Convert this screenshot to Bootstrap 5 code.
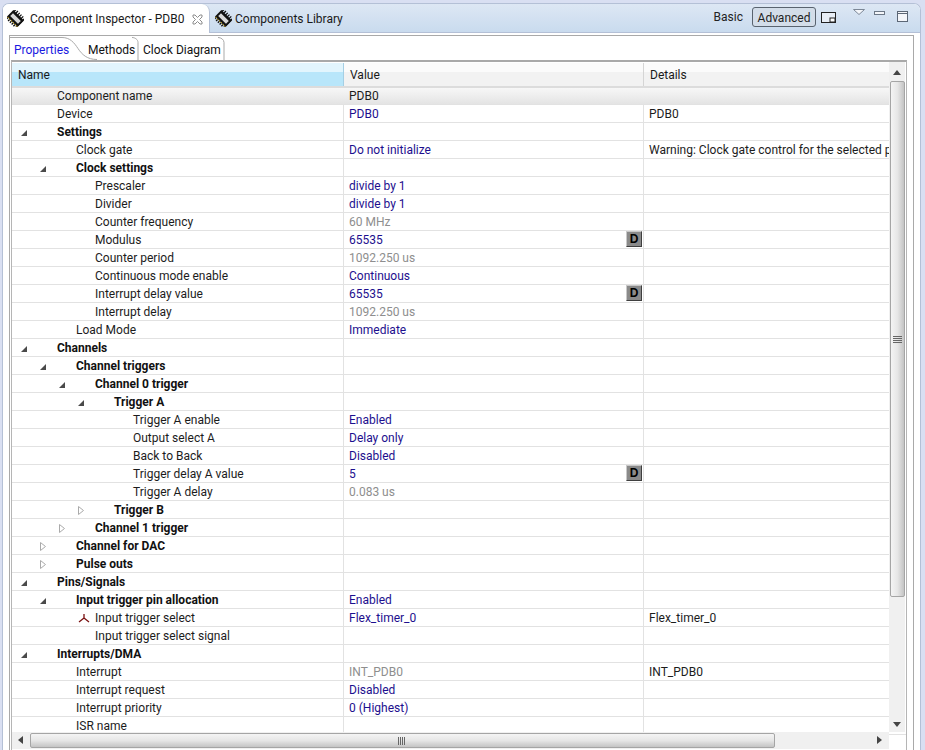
<!DOCTYPE html>
<html><head><meta charset="utf-8">
<link href="https://cdn.jsdelivr.net/npm/bootstrap@5.3.0/dist/css/bootstrap.min.css" rel="stylesheet">
<style>
html,body{height:750px;overflow:hidden;background:#fff}
body{font-family:Roboto,"Noto Sans",sans-serif;font-size:12px;line-height:18px;color:#1a1a1a;width:925px}
.shell{height:750px;padding:3px 4px 0 2px;background:#d9dff2}
.frame{height:747px;background:#fff;border:1px solid #b4c0d6;border-bottom:0;border-radius:7px 7px 0 0;overflow:hidden}
.viewtop{height:29px;background:linear-gradient(#dde7f4,#c9dbee);border-bottom:1px solid #b4c0d6;white-space:nowrap}
.wtab{height:29px;padding-top:6px}
.wtab.on{width:207px;padding-left:4px;background:#fff;border-radius:0 8px 0 0;border-right:1px solid #b4c0d6;box-shadow:0 1px 0 #fff}
.wtab.off{padding-left:5px}
.wtab span{margin-left:6px;line-height:17px;margin-top:1px}
.wtab.off span{margin-left:3px}
.closeic{margin-left:8px;margin-top:4px}
.tbtn{height:20px;line-height:18px;margin-top:3px;color:#222}
.tbtn.plain{margin-right:9px;margin-top:4px}
.tbtn.act{width:64px;padding-top:1px;text-align:center;background:#d3dde9;border:1px solid #59636f;border-radius:3px}
.ic1{margin:8px 0 0 5px}.ic2{margin:5px 0 0 16px}.ic3{margin:7px 0 0 9px}.ic4{margin:7px 12px 0 11px}
.viewbody{height:717px;padding:2px 6px 0 6px}
.panel{height:715px;border:1px solid #a9a9a9;border-bottom:0;padding:0 6px 0 1px}
.tabstrip{height:24px;position:relative;flex-wrap:nowrap;margin-left:-1px}
.tabstrip .nav-link{height:24px;line-height:18px;padding:5px 0 0;color:#111;font-size:12px;background:none;border:0;white-space:nowrap}
.tabstrip .nav-link.p1{color:#1a1ae0;width:74px;padding-left:4px}
.tabstrip .nav-link.p2{width:59px;padding-left:4px}
.tabstrip .nav-link.p3{width:82px}
.tabcurve{position:absolute;left:0;top:0;pointer-events:none}
.gridbox{border:1px solid #b5b5b5;border-top:2px solid #a9a9a9;border-bottom:0;height:691px}
.gridarea{height:689px;overflow:hidden;position:relative}
.cols{display:grid;grid-template-columns:332px 300px 262px;height:18px;border-bottom:1px solid #e2e2e2;white-space:nowrap}
.cols>div{padding-left:5px;overflow:hidden;border-right:1px solid #e2e2e2;position:relative}
.cols>div:last-child{border-right:0}
.headrow{height:25px;border-bottom:1px solid #dcdcdc;background:#fff}
.headrow>div{padding:4px 0 0 6px;margin-top:1px;line-height:16px;border-right:1px solid #d5d5d5;background:linear-gradient(#fbfbfb 0,#fbfbfb 38%,#f2f2f2 38%,#f2f2f2 100%)}
.headrow>.sorted{background:linear-gradient(#e2f5fd 0,#e2f5fd 40%,#b8e6fa 40%,#b8e6fa 100%);border-right:1px solid #a5cfe4}
.selrow{background:linear-gradient(#f8f8f8,#e4e4e4);box-shadow:inset 0 1px 0 #dcdcdc}
.selrow>div{border-right:0}
.l0{padding-left:45px!important}.l1{padding-left:64px!important}.l2{padding-left:83px!important}.l3{padding-left:102px!important}.l4{padding-left:121px!important}
.hd{font-weight:700;color:#111}
.v{color:#1d0f8e}.g{color:#8e8e8e}.k{color:#1c1c1c}
.open{position:absolute;top:7px;width:0;height:0;border-style:solid;border-width:0 0 6px 6px;border-color:transparent transparent #4a4a4a transparent}
.shut{position:absolute;top:5px}
.a0{left:9px}.a1{left:28px}.a2{left:47px}.a3{left:66px}
.dbtn{position:absolute;right:1px;top:0;width:16px;height:16px;background:#8a8a8a;border:1px solid;border-color:#c9c9c9 #3f3f3f #3f3f3f #c9c9c9;font:700 12px/14px "Liberation Sans",sans-serif;color:#000;text-align:center}
.pin{position:absolute;left:66px;top:4px}
.vbar{position:absolute;left:877px;top:0;width:17px;height:670px;background:#f0f0f0;box-shadow:inset -1px 0 0 #fff}
.hbar{position:absolute;left:0;top:670px;width:877px;height:17px;background:#f0f0f0}
.thumbv{position:absolute;left:1px;top:19px;width:15px;height:516px;background:linear-gradient(90deg,#f4f4f4,#e6e6e6 50%,#c4c4c4);border:1px solid #a5a5a5;border-radius:2px}
.thumbh{position:absolute;left:18px;top:1px;width:745px;height:15px;background:linear-gradient(#f4f4f4,#e6e6e6 50%,#c4c4c4);border:1px solid #a5a5a5;border-radius:2px}
.sarrow{position:absolute;width:0;height:0;border-style:solid;border-color:transparent}
.up{left:4px;top:8px;border-width:0 4px 5px;border-bottom-color:#444}
.dn{left:4px;top:660px;border-width:5px 4px 0;border-top-color:#444}
.lf{left:6px;top:4px;border-width:4px 5px 4px 0;border-right-color:#444}
.rt{left:865px;top:4px;border-width:4px 0 4px 5px;border-left-color:#444}
.gv{position:absolute;left:2px;top:253px}
.gh{position:absolute;left:366px;top:3px}
</style></head><body>
<div class="shell">
<div class="frame">
 <div class="viewtop d-flex">
  <div class="wtab on d-flex align-items-start">
   <svg width="17" height="17" viewBox="0 0 17 17"><g transform="rotate(-45 8.5 8.5)"><path d="M1.500 2.500h14M1.500 5h14M1.500 7.500h14M1.500 10h14M1.500 12.500h14M1.500 15h14" stroke="#111" stroke-width="1.300"/><rect x="4" y="1" width="9" height="15" fill="#111"/><path d="M3.500 2.500h1M3.500 5h1M3.500 7.500h1M3.500 10h1M3.500 12.500h1M3.500 15h1" stroke="#e0b820"/><rect x="6.500" y="3" width="4" height="11" fill="#d8d8d8"/></g></svg>
   <span>Component Inspector - PDB0</span>
   <svg class="closeic" width="11" height="11" viewBox="0 0 11 11"><path d="M1 1h2l2.500 2.500L8 1h2v2L7.500 5.500 10 8v2H8L5.500 7.500 3 10H1V8l2.500-2.500L1 3z" fill="#fff" stroke="#8c8c8c"/></svg>
  </div>
  <div class="wtab off d-flex align-items-start">
   <svg width="17" height="17" viewBox="0 0 17 17"><g transform="rotate(-45 8.5 8.5)"><path d="M1.500 2.500h14M1.500 5h14M1.500 7.500h14M1.500 10h14M1.500 12.500h14M1.500 15h14" stroke="#111" stroke-width="1.300"/><rect x="4" y="1" width="9" height="15" fill="#111"/><path d="M3.500 2.500h1M3.500 5h1M3.500 7.500h1M3.500 10h1M3.500 12.500h1M3.500 15h1" stroke="#e0b820"/><rect x="6.500" y="3" width="4" height="11" fill="#d8d8d8"/></g></svg>
   <span>Components Library</span>
  </div>
  <div class="ms-auto d-flex align-items-start">
   <span class="tbtn plain">Basic</span><span class="tbtn act">Advanced</span>
   <svg class="ic1" width="16" height="12" viewBox="0 0 16 12"><rect x=".5" y=".5" width="14" height="10" fill="#e8eef6" stroke="#222"/><rect x="9" y="6" width="5" height="4" fill="#fff" stroke="#222"/></svg>
   <svg class="ic2" width="12" height="6" viewBox="0 0 12 6"><path d="M.5.500h11L6 5.500z" fill="#f4f6fa" stroke="#7c8796"/></svg>
   <svg class="ic3" width="12" height="4" viewBox="0 0 12 4"><rect x=".5" y=".5" width="10" height="3" fill="#f4f6fa" stroke="#6c7786"/></svg>
   <svg class="ic4" width="11" height="11" viewBox="0 0 11 11"><rect x=".5" y=".5" width="10" height="10" fill="#f4f6fa" stroke="#5c6776"/><path d="M1 2.500h9" stroke="#5c6776"/></svg>
  </div>
 </div>
 <div class="viewbody">
  <div class="panel">
   <nav class="nav tabstrip">
    <svg class="tabcurve" width="220" height="24" viewBox="0 0 220 24"><path d="M0 1.500H52c8 0 12 5 16 11s9 11 19 11" fill="none" stroke="#a9a9a9"/><path d="M122 1.500c3 0 6 2 6 5V24M208 1.500c3 0 6 2 6 5V24" fill="none" stroke="#a9a9a9"/></svg>
    <a class="nav-link p1" href="#">Properties</a><a class="nav-link p2" href="#">Methods</a><a class="nav-link p3" href="#">Clock Diagram</a>
   </nav>
   <div class="gridbox">
   <div class="gridarea">
    <div class="cols headrow"><div class="sorted">Name</div><div>Value</div><div>Details</div></div>
    <div class="cols selrow"><div class="l0 k">Component name</div><div class="k">PDB0</div><div></div></div>
    <div class="cols"><div class="l0 k">Device</div><div class="v">PDB0</div><div class="k">PDB0</div></div>
    <div class="cols"><div class="l0 hd"><i class="open a0"></i>Settings</div><div></div><div></div></div>
    <div class="cols"><div class="l1 k">Clock gate</div><div class="v">Do not initialize</div><div class="k">Warning: Clock gate control for the selected p</div></div>
    <div class="cols"><div class="l1 hd"><i class="open a1"></i>Clock settings</div><div></div><div></div></div>
    <div class="cols"><div class="l2 k">Prescaler</div><div class="v">divide by 1</div><div></div></div>
    <div class="cols"><div class="l2 k">Divider</div><div class="v">divide by 1</div><div></div></div>
    <div class="cols"><div class="l2 k">Counter frequency</div><div class="g">60 MHz</div><div></div></div>
    <div class="cols"><div class="l2 k">Modulus</div><div class="v">65535<span class="dbtn">D</span></div><div></div></div>
    <div class="cols"><div class="l2 k">Counter period</div><div class="g">1092.250 us</div><div></div></div>
    <div class="cols"><div class="l2 k">Continuous mode enable</div><div class="v">Continuous</div><div></div></div>
    <div class="cols"><div class="l2 k">Interrupt delay value</div><div class="v">65535<span class="dbtn">D</span></div><div></div></div>
    <div class="cols"><div class="l2 k">Interrupt delay</div><div class="g">1092.250 us</div><div></div></div>
    <div class="cols"><div class="l1 k">Load Mode</div><div class="v">Immediate</div><div></div></div>
    <div class="cols"><div class="l0 hd"><i class="open a0"></i>Channels</div><div></div><div></div></div>
    <div class="cols"><div class="l1 hd"><i class="open a1"></i>Channel triggers</div><div></div><div></div></div>
    <div class="cols"><div class="l2 hd"><i class="open a2"></i>Channel 0 trigger</div><div></div><div></div></div>
    <div class="cols"><div class="l3 hd"><i class="open a3"></i>Trigger A</div><div></div><div></div></div>
    <div class="cols"><div class="l4 k">Trigger A enable</div><div class="v">Enabled</div><div></div></div>
    <div class="cols"><div class="l4 k">Output select A</div><div class="v">Delay only</div><div></div></div>
    <div class="cols"><div class="l4 k">Back to Back</div><div class="v">Disabled</div><div></div></div>
    <div class="cols"><div class="l4 k">Trigger delay A value</div><div class="v">5<span class="dbtn">D</span></div><div></div></div>
    <div class="cols"><div class="l4 k">Trigger A delay</div><div class="g">0.083 us</div><div></div></div>
    <div class="cols"><div class="l3 hd"><svg class="shut a3" width="6" height="9" viewBox="0 0 6 9"><path d="M.5.500l5 4-5 4z" fill="#fff" stroke="#aaa"/></svg>Trigger B</div><div></div><div></div></div>
    <div class="cols"><div class="l2 hd"><svg class="shut a2" width="6" height="9" viewBox="0 0 6 9"><path d="M.5.500l5 4-5 4z" fill="#fff" stroke="#aaa"/></svg>Channel 1 trigger</div><div></div><div></div></div>
    <div class="cols"><div class="l1 hd"><svg class="shut a1" width="6" height="9" viewBox="0 0 6 9"><path d="M.5.500l5 4-5 4z" fill="#fff" stroke="#aaa"/></svg>Channel for DAC</div><div></div><div></div></div>
    <div class="cols"><div class="l1 hd"><svg class="shut a1" width="6" height="9" viewBox="0 0 6 9"><path d="M.5.500l5 4-5 4z" fill="#fff" stroke="#aaa"/></svg>Pulse outs</div><div></div><div></div></div>
    <div class="cols"><div class="l0 hd"><i class="open a0"></i>Pins/Signals</div><div></div><div></div></div>
    <div class="cols"><div class="l1 hd"><i class="open a1"></i>Input trigger pin allocation</div><div class="v">Enabled</div><div></div></div>
    <div class="cols"><div class="l2 k"><svg class="pin" width="12" height="10" viewBox="0 0 12 10"><path d="M6 1v4M6 5L1 9M6 5l5 4" fill="none" stroke="#7a1010" stroke-width="1.3"/></svg>Input trigger select</div><div class="v">Flex_timer_0</div><div class="k">Flex_timer_0</div></div>
    <div class="cols"><div class="l2 k">Input trigger select signal</div><div></div><div></div></div>
    <div class="cols"><div class="l0 hd"><i class="open a0"></i>Interrupts/DMA</div><div></div><div></div></div>
    <div class="cols"><div class="l1 k">Interrupt</div><div class="g">INT_PDB0</div><div class="k">INT_PDB0</div></div>
    <div class="cols"><div class="l1 k">Interrupt request</div><div class="v">Disabled</div><div></div></div>
    <div class="cols"><div class="l1 k">Interrupt priority</div><div class="v">0 (Highest)</div><div></div></div>
    <div class="cols"><div class="l1 k">ISR name</div><div></div><div></div></div>
    <div class="vbar"><i class="sarrow up"></i><div class="thumbv"><svg class="gv" width="9" height="9" viewBox="0 0 9 9"><path d="M0 1.500h9M0 3.500h9M0 5.500h9M0 7.500h9" stroke="#666"/></svg></div><i class="sarrow dn"></i></div>
    <div class="hbar"><i class="sarrow lf"></i><div class="thumbh"><svg class="gh" width="9" height="8" viewBox="0 0 9 8"><path d="M1.500 0v8M3.500 0v8M5.500 0v8M7.500 0v8" stroke="#666"/></svg></div><i class="sarrow rt"></i></div>
   </div>
   </div>
  </div>
 </div>
</div>
</div>
<script src="https://cdn.jsdelivr.net/npm/bootstrap@5.3.0/dist/js/bootstrap.bundle.min.js"></script>
</body></html>
